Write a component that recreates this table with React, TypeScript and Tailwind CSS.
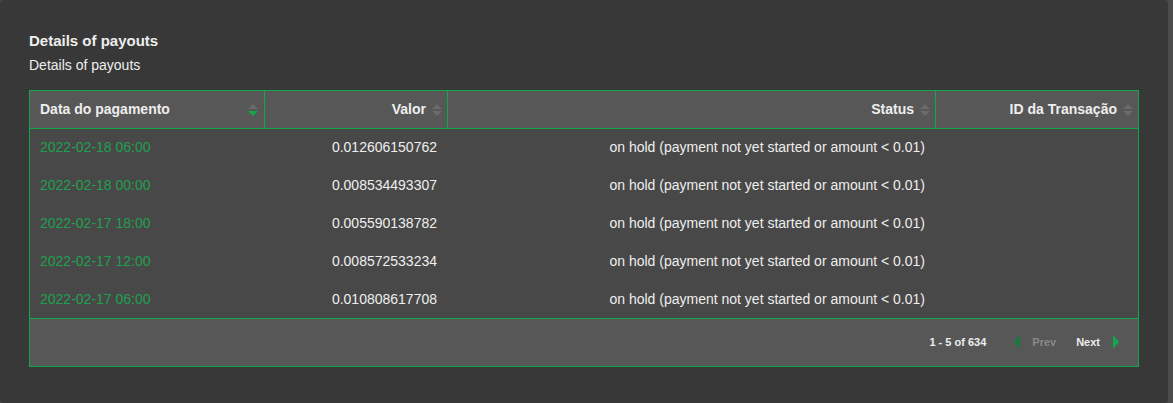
const rows = [
  { date: "2022-02-18 06:00", value: "0.012606150762" },
  { date: "2022-02-18 00:00", value: "0.008534493307" },
  { date: "2022-02-17 18:00", value: "0.005590138782" },
  { date: "2022-02-17 12:00", value: "0.008572533234" },
  { date: "2022-02-17 06:00", value: "0.010808617708" },
];

const status = "on hold (payment not yet started or amount < 0.01)";

const SortIcon = ({ active }: { active?: boolean }) => (
  <svg width="10" height="12" viewBox="0 0 10 12" className="shrink-0">
    <path d="M0 5 L5 0 L10 5 Z" fill="#6a6a6a" />
    <path d="M0 7 L5 12 L10 7 Z" fill={active ? "#10a84a" : "#6a6a6a"} />
  </svg>
);

const App = () => {
  return (
    <div
      className="h-[403px] w-full bg-[#4b4b4b] overflow-hidden"
      style={{ fontFamily: '"Liberation Sans", Arial, sans-serif' }}
    >
      <div className="h-full w-[1168px] rounded-[4px] bg-[#383838] pl-[29px] pt-[32px]">
        <h2 className="text-[15px] leading-[18px] font-bold text-[#eeeeee]">Details of payouts</h2>
        <p className="mt-[7px] text-[14px] leading-[16px] text-[#eeeeee]">Details of payouts</p>

        {/* payouts table */}
        <div className="mt-[17px] w-[1110px] border border-[#10a84a] text-[14px] text-[#eeeeee]">
          <div className="grid h-[38px] grid-cols-[234px_183px_488px_1fr] border-b border-[#10a84a] bg-[#575757] font-bold">
            <div className="flex items-center justify-between pl-[10px] pr-[6px]">
              <span>Data do pagamento</span>
              <SortIcon active />
            </div>
            <div className="flex items-center justify-end gap-[6px] border-l border-[#10a84a] pr-[5px]">
              <span>Valor</span>
              <SortIcon />
            </div>
            <div className="flex items-center justify-end gap-[6px] border-l border-[#10a84a] pr-[5px]">
              <span>Status</span>
              <SortIcon />
            </div>
            <div className="flex items-center justify-end gap-[6px] border-l border-[#10a84a] pr-[5px]">
              <span>ID da Transação</span>
              <SortIcon />
            </div>
          </div>

          <div className="bg-[#484848]">
            {rows.map((r, idx) => (
              <div key={idx} className="grid h-[37.8px] grid-cols-[234px_183px_488px_1fr] items-center">
                <div className="pl-[10px] text-[#1fa04f]">{r.date}</div>
                <div className="pr-[10px] text-right">{r.value}</div>
                <div className="pr-[10px] text-right">{status}</div>
                <div />
              </div>
            ))}
          </div>

          <div className="flex h-[48px] items-center justify-end border-t border-[#10a84a] bg-[#575757] pr-[19px] text-[11px] font-bold">
            <span>1 - 5 of 634</span>
            <svg width="6" height="14" viewBox="0 0 6 14" className="ml-[28px]">
              <path d="M6 0 L0 7 L6 14 Z" fill="#167a3c" />
            </svg>
            <span className="ml-[12px] text-[#8a8a8a]">Prev</span>
            <span className="ml-[20px]">Next</span>
            <svg width="6" height="14" viewBox="0 0 6 14" className="ml-[13px]">
              <path d="M0 0 L6 7 L0 14 Z" fill="#10a84a" />
            </svg>
          </div>
        </div>
      </div>
    </div>
  );
};

export default App;
